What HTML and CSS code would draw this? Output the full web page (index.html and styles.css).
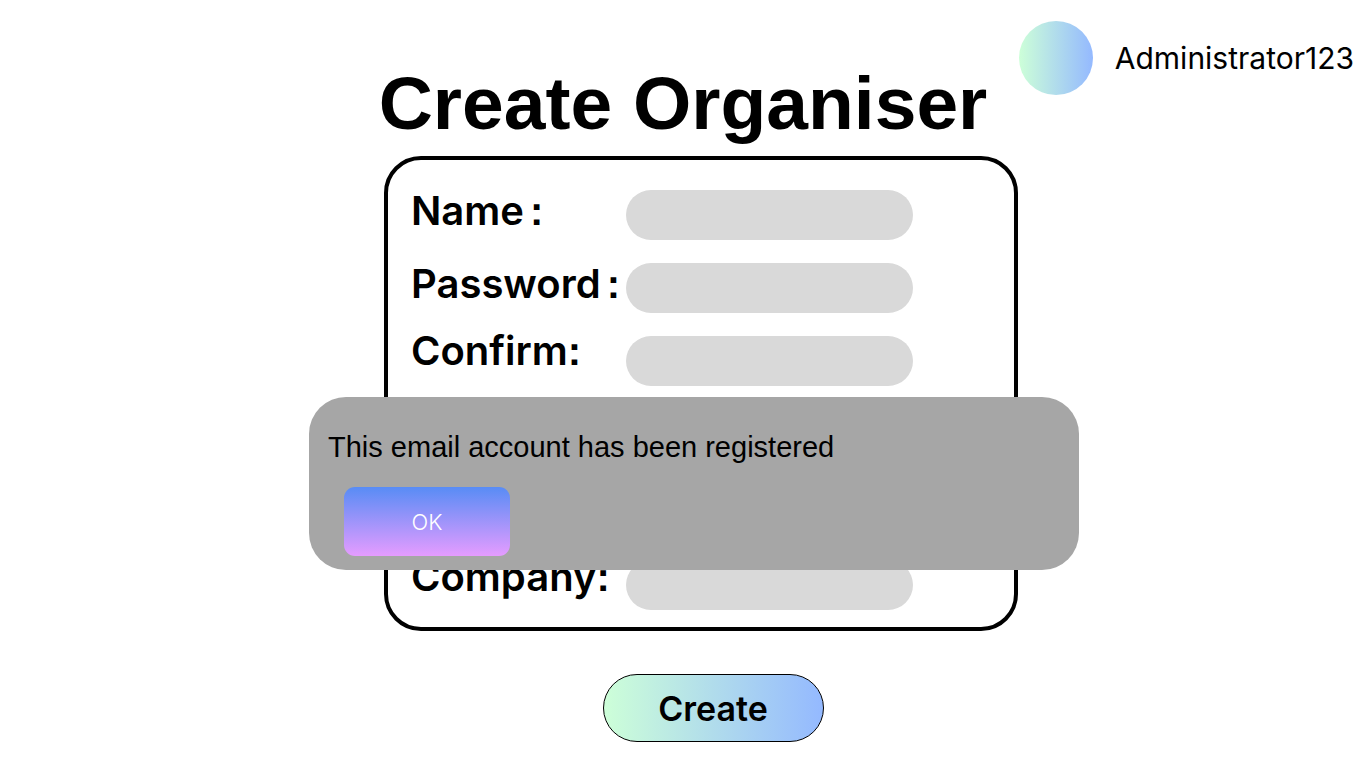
FILE: index.html
```html
<!DOCTYPE html>
<html lang="en">
<head>
<meta charset="utf-8">
<meta name="viewport" content="width=device-width, initial-scale=1">
<title>Create Organiser</title>
<link rel="stylesheet" href="styles.css">
</head>
<body>
<header class="header">
  <h1 class="title">Create Organiser</h1>
  <div class="user">
    <span class="avatar"></span>
    <span class="user-name">Administrator123</span>
  </div>
</header>
<main class="main">
  <form class="form" id="organiser">
    <div class="card">
      <div class="group">
        <div class="row">
          <label class="label" for="name">Name<span class="colon colon-spaced">:</span></label>
          <input class="field" id="name" type="text">
        </div>
        <div class="row">
          <label class="label" for="password">Password<span class="colon colon-spaced">:</span></label>
          <input class="field" id="password" type="password">
        </div>
        <div class="row">
          <label class="label label-high" for="confirm">Confirm<span class="colon">:</span></label>
          <input class="field" id="confirm" type="password">
        </div>
      </div>
      <div class="group">
        <div class="row">
          <label class="label label-raised" for="company">Company<span class="colon">:</span></label>
          <input class="field" id="company" type="text">
        </div>
      </div>
      <div class="alert" role="alertdialog" aria-labelledby="alert-text">
        <p class="alert-text" id="alert-text">This email account has been registered</p>
        <button class="ok" type="button">OK</button>
      </div>
    </div>
    <button class="create" type="submit">Create</button>
  </form>
</main>
</body>
</html>
```
FILE: styles.css
```css
* {
  box-sizing: border-box;
}

body {
  margin: 0;
  background: #fff;
  color: #000;
  font-family: Inter, "Liberation Sans", sans-serif;
}

.header {
  display: grid;
  grid-template-columns: 1fr auto 1fr;
  align-items: start;
  padding-top: 21px;
}

.title {
  grid-column: 2;
  margin: 40px 0 0;
  font-family: "Liberation Sans", Arial, sans-serif;
  font-size: 75px;
  line-height: 84px;
  font-weight: 700;
  white-space: nowrap;
}

.user {
  display: flex;
  align-items: center;
  justify-content: flex-end;
  gap: 22px;
  padding-right: 12px;
}

.avatar {
  flex: none;
  width: 74px;
  height: 74px;
  border-radius: 50%;
  background: linear-gradient(90deg, #cdffd8, #94b9ff);
}

.user-name {
  font-size: 30px;
  line-height: 36px;
}

.main {
  padding: 11px 0 24px 36px;
}

.form {
  display: flex;
  flex-direction: column;
  align-items: center;
  gap: 43px;
}

.card {
  position: relative;
  display: flex;
  flex-direction: column;
  justify-content: space-between;
  width: 100%;
  max-width: 634px;
  min-height: 475px;
  padding: 30px 101px 17px 23px;
  border: 4px solid #000;
  border-radius: 37px;
}

.group {
  display: grid;
  gap: 23px;
}

.row {
  display: grid;
  grid-template-columns: 215px 1fr;
  align-items: center;
}

.label {
  padding-bottom: 8px;
  font-size: 40px;
  line-height: 40px;
  font-weight: 600;
  white-space: nowrap;
}

.label-raised {
  padding-bottom: 16px;
  line-height: 34px;
}

.label-high {
  padding-bottom: 20px;
  line-height: 30px;
}

.colon {
  font-family: "Liberation Sans", Arial, sans-serif;
  font-weight: 700;
}

.colon-spaced {
  margin-left: 6px;
}

.field {
  width: 100%;
  height: 50px;
  padding: 0 24px;
  border: 0;
  border-radius: 25px;
  background: #d9d9d9;
  font: inherit;
  font-size: 24px;
}

.alert {
  position: absolute;
  top: 237px;
  left: -79px;
  right: -65px;
  padding: 32px 19px 14px;
  border-radius: 37px;
  background: #a6a6a6;
}

.alert-text {
  margin: 0 0 22px;
  font-family: "Liberation Sans", Arial, sans-serif;
  font-size: 29px;
  line-height: 36px;
}

.ok {
  display: block;
  width: 166px;
  height: 69px;
  margin-left: 16px;
  border: 0;
  border-radius: 11px;
  background: linear-gradient(180deg, #588cf5, #e59cff);
  color: #fff;
  font-family: inherit;
  font-size: 22px;
  font-weight: 300;
}

.create {
  width: 221px;
  height: 68px;
  margin-left: 24px;
  border: 1px solid #000;
  border-radius: 34px;
  background: linear-gradient(90deg, #cdffd8, #94b9ff);
  color: #000;
  font-family: inherit;
  font-size: 34px;
  font-weight: 600;
}
```
